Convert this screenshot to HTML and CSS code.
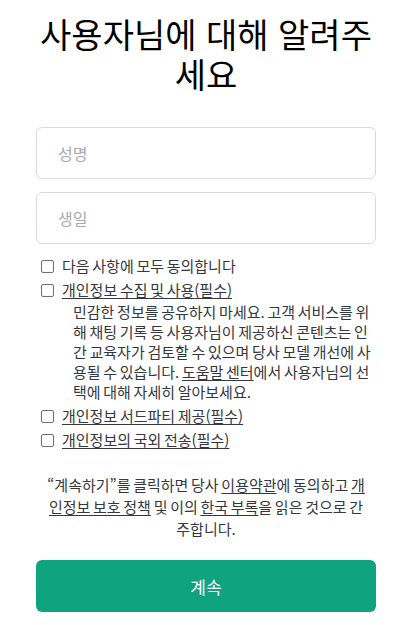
FILE: index.html
```html
<!DOCTYPE html>
<html lang="ko">
<head>
<meta charset="utf-8">
<link rel="stylesheet" href="styles.css">
</head>
<body>
<main class="page">
  <h1 class="title">사용자님에 대해 알려주세요</h1>
  <div class="field"><span class="placeholder">성명</span></div>
  <div class="field"><span class="placeholder">생일</span></div>
  <div class="checks">
    <label class="check"><span class="box"></span><span>다음 사항에 모두 동의합니다</span></label>
    <label class="check"><span class="box"></span><span class="u">개인정보 수집 및 사용(필수)</span></label>
    <p class="note">민감한 정보를 공유하지 마세요. 고객 서비스를 위해 채팅 기록 등 사용자님이 제공하신 콘텐츠는 인간 교육자가 검토할 수 있으며 당사 모델 개선에 사용될 수 있습니다. <span class="u">도움말 센터</span>에서 사용자님의 선택에 대해 자세히 알아보세요.</p>
    <label class="check"><span class="box"></span><span class="u">개인정보 서드파티 제공(필수)</span></label>
    <label class="check"><span class="box"></span><span class="u">개인정보의 국외 전송(필수)</span></label>
  </div>
  <p class="terms">“계속하기”를 클릭하면 당사 <span class="u">이용약관</span>에 동의하고 <span class="u">개인정보 보호 정책</span> 및 이의 <span class="u">한국 부록</span>을 읽은 것으로 간주합니다.</p>
  <button class="btn">계속</button>
</main>
</body>
</html>
```
FILE: styles.css
```css
html, body {
  margin: 0;
  padding: 0;
  background: #fff;
}
body {
  font-family: "Noto Sans CJK KR", "Noto Sans", sans-serif;
  color: #353740;
}
.page {
  width: 340px;
  margin-left: 36px;
  display: flex;
  flex-direction: column;
}
.title {
  margin: 14px 0 0;
  font-size: 34px;
  line-height: 40px;
  font-weight: 400;
  text-align: center;
  color: #000;
}
.field {
  height: 52px;
  box-sizing: border-box;
  border: 1px solid #d9d9e3;
  border-radius: 6px;
  display: flex;
  align-items: center;
  padding-left: 21px;
  margin-top: 13px;
}
.title + .field {
  margin-top: 33px;
}
.placeholder {
  font-size: 16px;
  color: #a9a9b3;
}
.checks {
  margin-top: 10px;
  display: flex;
  flex-direction: column;
  font-size: 15px;
  line-height: 24px;
  word-spacing: -1.5px;
}
.check {
  display: flex;
  align-items: center;
  gap: 8px;
  padding-left: 5px;
}
.box {
  width: 11px;
  height: 11px;
  border: 1px solid #6e6e80;
  border-radius: 2px;
  flex: none;
}
.u {
  text-decoration: underline;
  text-underline-offset: 2px;
}
.note {
  margin: 0 0 2px 0;
  padding-left: 37px;
  line-height: 20px;
}
.terms {
  margin: 22px 0 0;
  padding: 0 8px;
  font-size: 15px;
  line-height: 22px;
  text-align: center;
  word-spacing: -1.5px;
}
.btn {
  margin-top: 20px;
  height: 52px;
  border: none;
  border-radius: 6px;
  background: #10a37f;
  color: #fff;
  font-family: inherit;
  font-size: 17px;
}
```
